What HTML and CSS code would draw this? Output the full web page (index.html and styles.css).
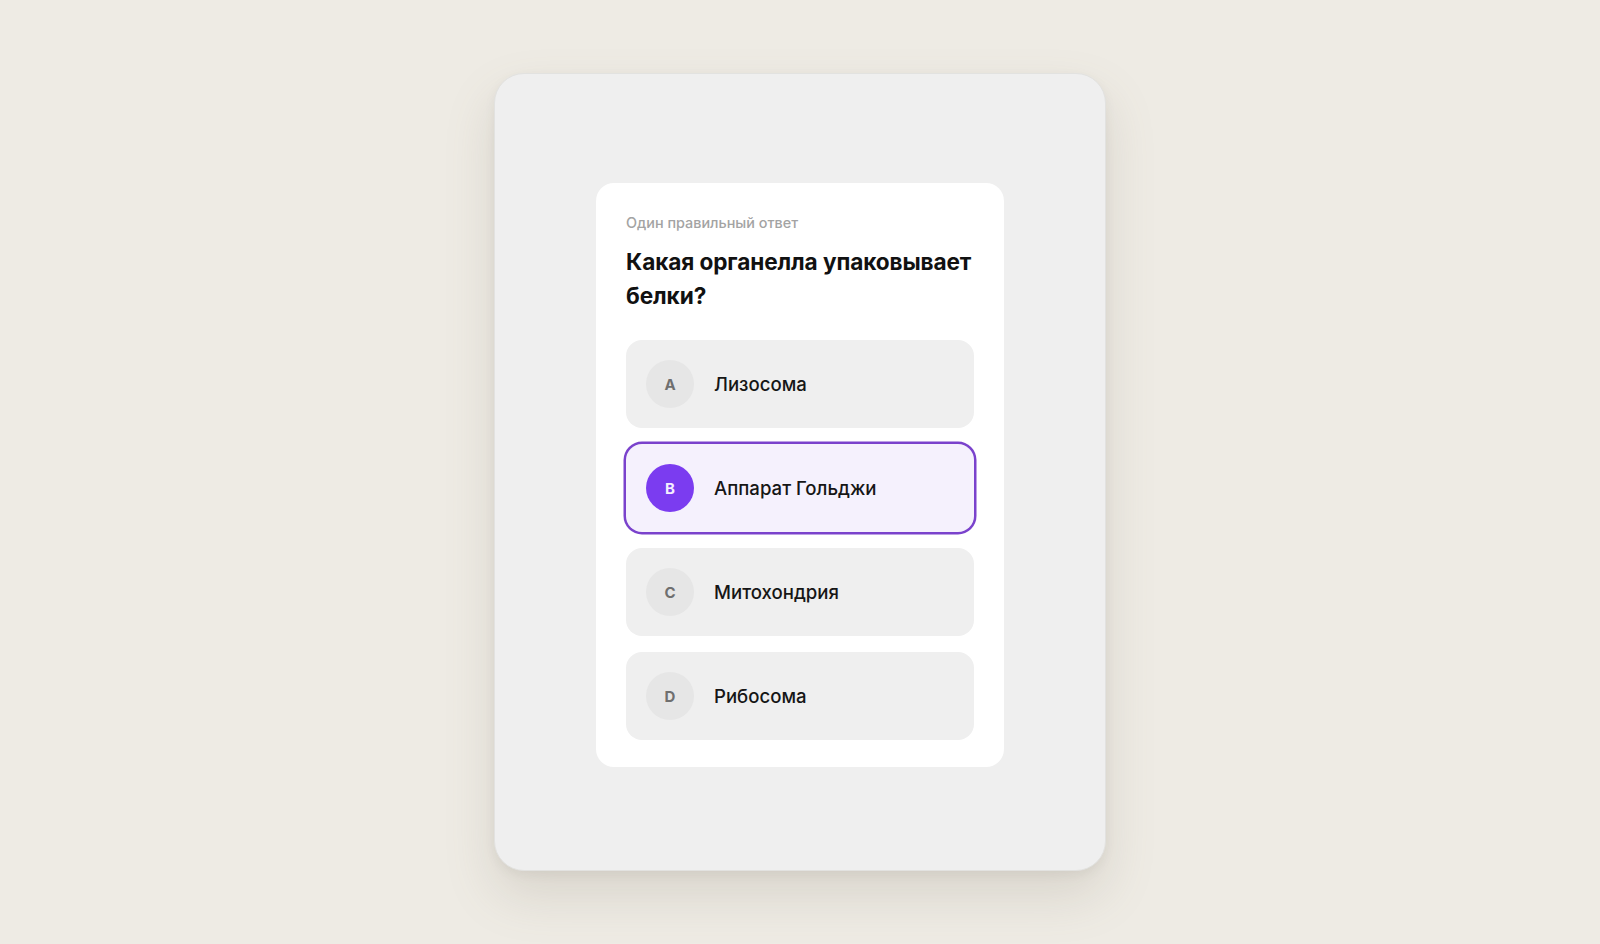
FILE: index.html
```html
<!DOCTYPE html>
<html lang="ru">
<head>
<meta charset="utf-8">
<title>Quiz</title>
<link rel="stylesheet" href="styles.css">
</head>
<body>
<main class="stage">
  <section class="device">
    <div class="quiz">
      <p class="quiz-hint">Один правильный ответ</p>
      <h1 class="quiz-question">Какая органелла упаковывает белки?</h1>
      <ul class="options">
        <li class="option"><span class="option-letter">A</span><span class="option-text">Лизосома</span></li>
        <li class="option option--selected"><span class="option-letter">B</span><span class="option-text">Аппарат Гольджи</span></li>
        <li class="option"><span class="option-letter">C</span><span class="option-text">Митохондрия</span></li>
        <li class="option"><span class="option-letter">D</span><span class="option-text">Рибосома</span></li>
      </ul>
    </div>
  </section>
</main>
</body>
</html>
```

FILE: styles.css
```css
* { box-sizing: border-box; }

html, body {
  margin: 0;
  padding: 0;
  height: 100%;
}

body {
  background: #eeebe4;
  font-family: Inter, "Noto Sans", "DejaVu Sans", sans-serif;
  color: #151515;
}

.stage {
  height: 944px;
  display: flex;
  align-items: center;
  justify-content: center;
}

.device {
  width: 612px;
  height: 798px;
  background: #efefef;
  border-radius: 30px;
  border: 1px solid #e2e2e0;
  box-shadow: 0 24px 50px rgba(120, 110, 95, 0.18), 0 4px 12px rgba(0, 0, 0, 0.05);
  display: flex;
  align-items: center;
  justify-content: center;
  padding-top: 6px;
}

.quiz {
  width: 408px;
  background: #ffffff;
  border-radius: 18px;
  padding: 30px 30px 27px;
}

.quiz-hint {
  margin: 0;
  font-size: 14.4px;
  line-height: 20px;
  font-weight: 500;
  color: #a3a3a3;
}

.quiz-question {
  margin: 12px 0 0;
  font-size: 22.6px;
  line-height: 34px;
  font-weight: 700;
  color: #111111;
  letter-spacing: -0.1px;
}

.options {
  list-style: none;
  margin: 27px 0 0;
  padding: 0;
  display: flex;
  flex-direction: column;
  gap: 16px;
}

.option {
  height: 88px;
  background: #efefef;
  border-radius: 16px;
  display: flex;
  align-items: center;
  padding: 0 20px;
  gap: 20px;
}

.option-letter {
  width: 48px;
  height: 48px;
  border-radius: 50%;
  background: #e6e6e6;
  color: #6f6f6f;
  font-size: 15px;
  font-weight: 700;
  display: flex;
  align-items: center;
  justify-content: center;
  flex: none;
}

.option-text {
  font-size: 18.6px;
  font-weight: 500;
  color: #161616;
}

.option--selected {
  background: #f5f1fd;
  box-shadow: 0 0 0 2.5px #7a42cc;
}

.option--selected .option-letter {
  background: #7b3cf0;
  color: #f4eeff;
}
```
